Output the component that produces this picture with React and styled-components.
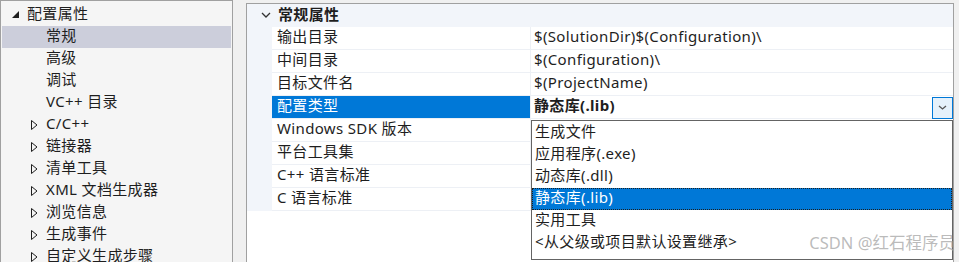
import styled, { createGlobalStyle } from "styled-components";

const GlobalStyle = createGlobalStyle`
  html, body {
    margin: 0;
    padding: 0;
    background: #f0f0f0;
  }
  body {
    font-family: "Noto Sans", "Noto Sans CJK SC", sans-serif;
    font-size: 15px;
    letter-spacing: 0.35px;
    color: #1e1e1e;
  }
`;

const Page = styled.div`
  position: relative;
  display: flex;
  align-items: flex-start;
  width: 959px;
  height: 262px;
  overflow: hidden;
  background: #f0f0f0;
`;

const TreePanel = styled.div`
  box-sizing: border-box;
  width: 233px;
  height: 270px;
  margin-top: 0;
  padding-top: 3px;
  background: #f5f5f5;
  border: 1px solid #a0a0a0;
`;

const TreeRow = styled.div`
  box-sizing: border-box;
  display: flex;
  align-items: center;
  height: 22px;
  margin: 0 1px;
  padding-left: ${(p) => p.$indent}px;
  padding-bottom: 3px;
  line-height: 1;
  background: ${(p) => (p.$selected ? "#cccedb" : "transparent")};
  white-space: nowrap;
`;

const Arrow = styled.span`
  display: flex;
  align-items: center;
  justify-content: center;
  width: ${(p) => p.$w}px;
  margin-right: ${(p) => p.$gap}px;
  padding-top: 2px;
`;

const GridPanel = styled.div`
  position: relative;
  box-sizing: border-box;
  width: 708px;
  height: 270px;
  margin-top: 3px;
  margin-left: 13px;
  background: #ffffff;
  border: 1px solid #a0a0a0;
`;

const GridBody = styled.div`
  display: grid;
  grid-template-columns: 25px 259px 1fr;
`;

const GroupHeader = styled.div`
  grid-column: 1 / -1;
  box-sizing: border-box;
  display: flex;
  align-items: center;
  height: 23px;
  padding-bottom: 3px;
  line-height: 1;
  background: #f2f5fa;
  font-weight: bold;
`;

const Chevron = styled.span`
  display: flex;
  justify-content: center;
  width: 25px;
  margin-left: 6px;
  padding-top: 2px;
`;

const Gutter = styled.div`
  background: #f2f5fa;
`;

const NameCell = styled.div`
  box-sizing: border-box;
  display: flex;
  align-items: center;
  height: 23px;
  padding-left: 5px;
  padding-bottom: 3px;
  line-height: 1;
  border-bottom: 1px solid #edf0f5;
  border-right: 1px solid #edf0f5;
  background: ${(p) => (p.$active ? "#0078d7" : "#ffffff")};
  color: ${(p) => (p.$active ? "#ffffff" : "#1e1e1e")};
  white-space: nowrap;
`;

const ValueCell = styled.div`
  box-sizing: border-box;
  display: flex;
  align-items: center;
  height: 23px;
  padding-left: 3px;
  line-height: 1;
  border-bottom: 1px solid #edf0f5;
  font-weight: ${(p) => (p.$bold ? "bold" : "normal")};
  white-space: nowrap;
`;

const ValueText = styled.span`
  flex: 1;
  padding-bottom: 3px;
`;

const DropButton = styled.div`
  box-sizing: border-box;
  display: flex;
  align-items: center;
  justify-content: center;
  width: 21px;
  height: 22px;
  margin-top: 1px;
  background: #e5f1fb;
  border: 1px solid #0078d7;
`;

const ListBox = styled.div`
  position: absolute;
  left: 284px;
  top: 116px;
  box-sizing: border-box;
  width: 422px;
  height: 140px;
  padding-top: 1px;
  background: #ffffff;
  border: 1px solid #646464;
`;

const ListItem = styled.div`
  box-sizing: border-box;
  display: flex;
  align-items: center;
  height: 22px;
  padding-left: 2px;
  padding-bottom: 3px;
  line-height: 1;
  background: ${(p) => (p.$active ? "#0078d7" : "transparent")};
  color: ${(p) => (p.$active ? "#ffffff" : "#1e1e1e")};
  border: 1px dotted ${(p) => (p.$active ? "#1e1e1e" : "transparent")};
  white-space: nowrap;
`;

const Watermark = styled.div`
  position: absolute;
  right: 4px;
  bottom: 8px;
  font-family: "Noto Sans", "Noto Sans CJK SC", sans-serif;
  font-size: 16.5px;
  letter-spacing: 0;
  color: rgba(165, 165, 165, 0.75);
`;

const treeItems = [
  { label: "常规", selected: true },
  { label: "高级" },
  { label: "调试" },
  { label: "VC++ 目录" },
  { label: "C/C++", collapsed: true },
  { label: "链接器", collapsed: true },
  { label: "清单工具", collapsed: true },
  { label: "XML 文档生成器", collapsed: true },
  { label: "浏览信息", collapsed: true },
  { label: "生成事件", collapsed: true },
  { label: "自定义生成步骤", collapsed: true },
];

const props = [
  { name: "输出目录", value: "$(SolutionDir)$(Configuration)\\" },
  { name: "中间目录", value: "$(Configuration)\\" },
  { name: "目标文件名", value: "$(ProjectName)" },
  { name: "配置类型", value: "静态库(.lib)", active: true },
  { name: "Windows SDK 版本", value: "" },
  { name: "平台工具集", value: "" },
  { name: "C++ 语言标准", value: "" },
  { name: "C 语言标准", value: "" },
];

const options = [
  "生成文件",
  "应用程序(.exe)",
  "动态库(.dll)",
  "静态库(.lib)",
  "实用工具",
  "<从父级或项目默认设置继承>",
];

const ExpandedIcon = () => (
  <svg width="7" height="7" viewBox="0 0 7 7">
    <polygon points="7,0 7,7 0,7" fill="#1e1e1e" />
  </svg>
);

const CollapsedIcon = () => (
  <svg width="7" height="10" viewBox="0 0 7 10">
    <polygon points="0.5,0.5 6,5 0.5,9.5" fill="none" stroke="#1e1e1e" strokeWidth="1" />
  </svg>
);

const ChevronDown = ({ w = 10, h = 6, color = "#333" }) => (
  <svg width={w} height={h} viewBox={`0 0 ${w} ${h}`}>
    <polyline
      points={`1,1 ${w / 2},${h - 1} ${w - 1},1`}
      fill="none"
      stroke={color}
      strokeWidth="1.3"
    />
  </svg>
);

export default function App() {
  return (
    <>
      <GlobalStyle />
      <Page>
        <TreePanel>
          <TreeRow $indent={9}>
            <Arrow $w={9} $gap={7}>
              <ExpandedIcon />
            </Arrow>
            配置属性
          </TreeRow>
          {treeItems.map((item) => (
            <TreeRow key={item.label} $indent={28} $selected={item.selected}>
              <Arrow $w={9} $gap={7}>
                {item.collapsed && <CollapsedIcon />}
              </Arrow>
              {item.label}
            </TreeRow>
          ))}
        </TreePanel>

        <GridPanel>
          <GridBody>
            <GroupHeader>
              <Chevron>
                <ChevronDown />
              </Chevron>
              常规属性
            </GroupHeader>
            {props.map((p) => (
              <>
                <Gutter key={p.name + "-g"} />
                <NameCell key={p.name} $active={p.active}>
                  {p.name}
                </NameCell>
                <ValueCell key={p.name + "-v"} $bold={p.active}>
                  <ValueText>{p.value}</ValueText>
                  {p.active && (
                    <DropButton>
                      <ChevronDown w={9} h={5} color="#555" />
                    </DropButton>
                  )}
                </ValueCell>
              </>
            ))}
          </GridBody>

          <ListBox>
            {options.map((o) => (
              <ListItem key={o} $active={o === "静态库(.lib)"}>
                {o}
              </ListItem>
            ))}
          </ListBox>
        </GridPanel>

        <Watermark>CSDN @红石程序员</Watermark>
      </Page>
    </>
  );
}
